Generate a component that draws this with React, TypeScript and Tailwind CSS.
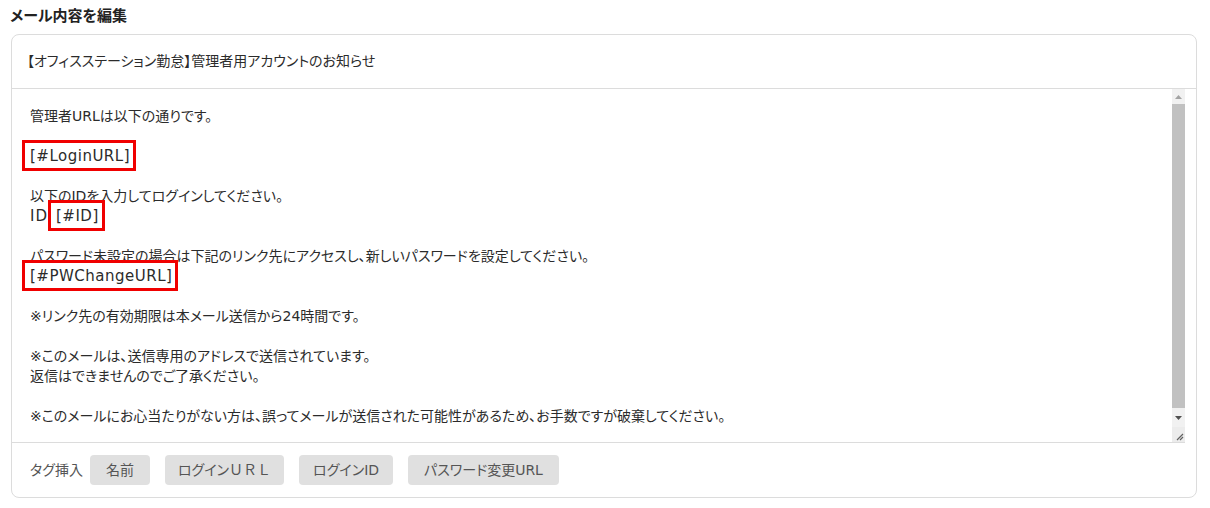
import React from 'react';

const font = {
  fontFamily: '"DejaVu Sans", "Noto Sans CJK JP", sans-serif',
  fontFeatureSettings: '"palt"',
};

const Tag: React.FC<{ children: React.ReactNode }> = ({ children }) => (
  <span className="relative text-[15px] tracking-[0.5px]">
    {children}
    <span className="absolute -left-[8px] -right-[6px] -top-[7px] -bottom-[6px] border-[3px] border-[#f00000]"></span>
  </span>
);

const Scrollbar: React.FC = () => (
  <div className="w-[13px] flex flex-col bg-[#f1f1f1]">
    <div className="h-[15px] flex items-center justify-center">
      <svg width="7" height="4" viewBox="0 0 7 4"><path d="M0 4 L3.5 0 L7 4 Z" fill="#a3a3a3" /></svg>
    </div>
    <div className="h-[304px] bg-[#c1c1c1]"></div>
    <div className="flex-1 flex items-center justify-center">
      <svg width="7" height="4" viewBox="0 0 7 4"><path d="M0 0 L7 0 L3.5 4 Z" fill="#505050" /></svg>
    </div>
    <div className="h-[15px] bg-[#ececec] relative">
      <svg className="absolute right-[1px] bottom-[1px]" width="10" height="10" viewBox="0 0 10 10">
        <path d="M9 3 L3 9 M9 6 L6 9" stroke="#606060" strokeWidth="1.2" />
      </svg>
    </div>
  </div>
);

const Btn: React.FC<{ children: React.ReactNode; className?: string }> = ({ children, className = 'px-[16px]' }) => (
  <button className={`h-[30px] rounded-[4px] bg-[#e0e0e0] text-[14px] text-[#555] ${className}`}>{children}</button>
);

export default function App() {
  return (
    <div className="w-[1210px] h-[508px] bg-white pl-[11px] pr-[13px] pt-[6px] text-[#2b2b2b]" style={font}>
      <h1 className="text-[15px] leading-[20px] font-bold text-[#222] -ml-[1px] mb-[8px]">メール内容を編集</h1>
      <div className="border border-[#dcdcdc] rounded-[8px] overflow-hidden">
        <div className="h-[54px] border-b border-[#dcdcdc] flex items-center pl-[15px] text-[14px]">
          【オフィスステーション勤怠】管理者用アカウントのお知らせ
        </div>
        <div className="flex h-[354px]">
          <div className="flex-1 flex border-b border-[#dcdcdc]">
            <div className="flex-1 pl-[18px] pt-[17px] text-[14px] leading-[20px]">
              <div>管理者URLは以下の通りです。</div>
              <div className="h-[20px]"></div>
              <div><Tag>[#LoginURL]</Tag></div>
              <div className="h-[20px]"></div>
              <div>以下のIDを入力してログインしてください。</div>
              <div><span className="inline-block w-[26px] text-[15px] tracking-[1px]">ID</span><Tag>[#ID]</Tag></div>
              <div className="h-[20px]"></div>
              <div>パスワード未設定の場合は下記のリンク先にアクセスし、新しいパスワードを設定してください。</div>
              <div><Tag>[#PWChangeURL]</Tag></div>
              <div className="h-[20px]"></div>
              <div>※リンク先の有効期限は本メール送信から24時間です。</div>
              <div className="h-[20px]"></div>
              <div>※このメールは、送信専用のアドレスで送信されています。</div>
              <div>返信はできませんのでご了承ください。</div>
              <div className="h-[20px]"></div>
              <div>※このメールにお心当たりがない方は、誤ってメールが送信された可能性があるため、お手数ですが破棄してください。</div>
            </div>
            <Scrollbar />
          </div>
          <div className="w-[11px]"></div>
        </div>
        <div className="h-[54px] flex items-center pl-[18px] gap-[15px]">
          <span className="text-[14px] text-[#555] -mr-[8px]">タグ挿入</span>
          <Btn>名前</Btn>
          <Btn className="px-[13px]">
            ログイン<span className="[font-feature-settings:normal]">ＵＲＬ</span>
          </Btn>
          <Btn className="px-[14px]">ログインID</Btn>
          <Btn>パスワード変更URL</Btn>
        </div>
      </div>
    </div>
  );
}
